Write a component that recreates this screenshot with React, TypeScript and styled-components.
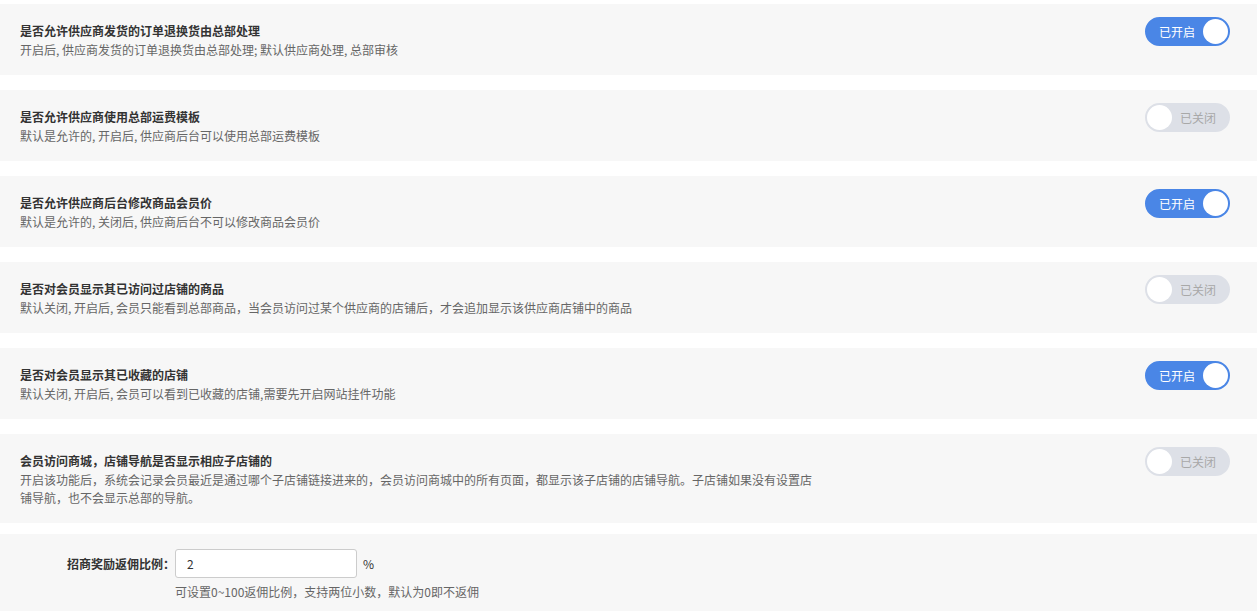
import styled, { createGlobalStyle } from "styled-components";

const GlobalStyle = createGlobalStyle`
  body {
    margin: 0;
    background: #fff;
    font-family: "Noto Sans CJK SC", "Liberation Sans", sans-serif;
    font-size: 12px;
    color: #333;
  }
`;

type Setting = { title: string; desc: string; on: boolean };

const settings: Setting[] = [
  {
    title: "是否允许供应商发货的订单退换货由总部处理",
    desc: "开启后, 供应商发货的订单退换货由总部处理; 默认供应商处理, 总部审核",
    on: true,
  },
  {
    title: "是否允许供应商使用总部运费模板",
    desc: "默认是允许的, 开启后, 供应商后台可以使用总部运费模板",
    on: false,
  },
  {
    title: "是否允许供应商后台修改商品会员价",
    desc: "默认是允许的, 关闭后, 供应商后台不可以修改商品会员价",
    on: true,
  },
  {
    title: "是否对会员显示其已访问过店铺的商品",
    desc: "默认关闭, 开启后, 会员只能看到总部商品，当会员访问过某个供应商的店铺后，才会追加显示该供应商店铺中的商品",
    on: false,
  },
  {
    title: "是否对会员显示其已收藏的店铺",
    desc: "默认关闭, 开启后, 会员可以看到已收藏的店铺,需要先开启网站挂件功能",
    on: true,
  },
  {
    title: "会员访问商城，店铺导航是否显示相应子店铺的",
    desc: "开启该功能后，系统会记录会员最近是通过哪个子店铺链接进来的，会员访问商城中的所有页面，都显示该子店铺的店铺导航。子店铺如果没有设置店铺导航，也不会显示总部的导航。",
    on: false,
  },
];

const Page = styled.div`
  padding-top: 4px;
  width: 1257px;
  display: flex;
  flex-direction: column;
  gap: 15px;
`;

const Card = styled.div`
  background: #f7f7f7;
  display: flex;
  align-items: flex-start;
  justify-content: space-between;
  padding: 17px 27px 16px 20px;
`;

const Text = styled.div`
  max-width: 800px;
`;

const Title = styled.div`
  font-weight: bold;
  line-height: 20px;
  color: #333;
`;

const Desc = styled.div`
  line-height: 18px;
  color: #666;
`;

const Toggle = styled.div<{ $on: boolean }>`
  margin-top: -4px;
  width: 85px;
  height: 29px;
  box-sizing: border-box;
  border-radius: 15px;
  border: 2px solid ${(p) => (p.$on ? "#4a86e6" : "#dde0e7")};
  background: ${(p) => (p.$on ? "#4a86e6" : "#dde0e7")};
  display: flex;
  flex-direction: ${(p) => (p.$on ? "row" : "row-reverse")};
  align-items: center;
  justify-content: space-between;
  flex-shrink: 0;
`;

const ToggleLabel = styled.span<{ $on: boolean }>`
  color: ${(p) => (p.$on ? "#fff" : "#a8a8a8")};
  padding: ${(p) => (p.$on ? "0 0 0 12px" : "0 12px 0 0")};
  font-size: 12px;
  line-height: 1;
`;

const Knob = styled.span`
  width: 25px;
  height: 25px;
  border-radius: 50%;
  background: #fff;
`;

const FormCard = styled.div`
  background: #f7f7f7;
  margin-top: -4px;
  padding: 15px 0 12px;
  display: grid;
  grid-template-columns: 175px auto;
  row-gap: 5px;
  align-items: center;
`;

const Label = styled.label`
  text-align: right;
  font-weight: bold;
  color: #333;
`;

const Row = styled.div`
  display: flex;
  align-items: center;
  gap: 6px;
`;

const Input = styled.input`
  width: 182px;
  height: 29px;
  box-sizing: border-box;
  border: 1px solid #ccc;
  border-radius: 3px;
  padding: 0 11px;
  font-family: inherit;
  font-size: 12px;
  color: #333;
  outline: none;
`;

const Hint = styled.div`
  grid-column: 2;
  color: #666;
  line-height: 18px;
`;

export default function App() {
  return (
    <>
      <GlobalStyle />
      <Page>
        {settings.map((s) => (
          <Card key={s.title}>
            <Text>
              <Title>{s.title}</Title>
              <Desc>{s.desc}</Desc>
            </Text>
            <Toggle $on={s.on}>
              <ToggleLabel $on={s.on}>{s.on ? "已开启" : "已关闭"}</ToggleLabel>
              <Knob />
            </Toggle>
          </Card>
        ))}
        <FormCard>
          <Label>招商奖励返佣比例：</Label>
          <Row>
            <Input defaultValue="2" />
            <span>%</span>
          </Row>
          <Hint>可设置0~100返佣比例，支持两位小数，默认为0即不返佣</Hint>
        </FormCard>
      </Page>
    </>
  );
}
